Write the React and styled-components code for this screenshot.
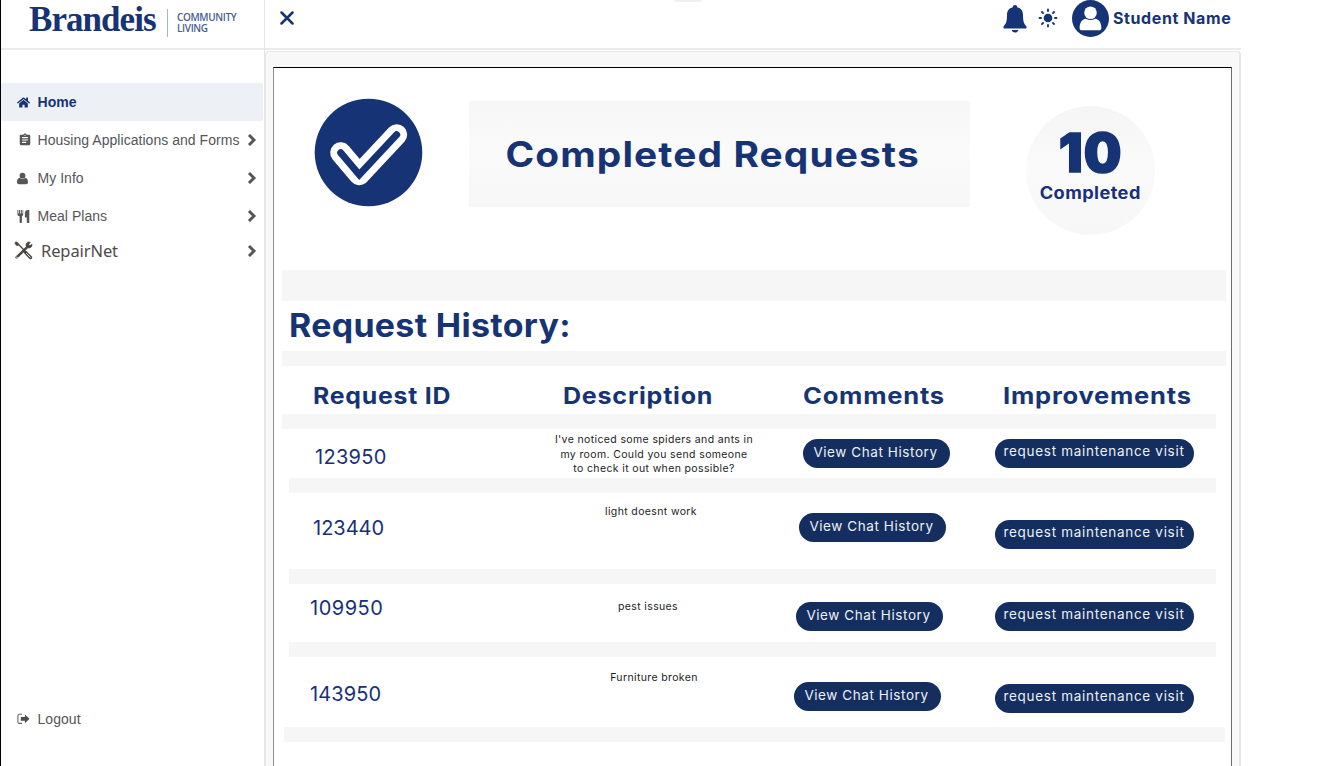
import React from "react";
import styled, { createGlobalStyle } from "styled-components";
import { FaHome } from "react-icons/fa";
import { MdAssignment } from "react-icons/md";

const NAVY = "#163475";
const INK = "#18307a";
const BAND = "#f6f6f6";

const GlobalStyle = createGlobalStyle`
  * { box-sizing: border-box; }
  body { margin: 0; background: #fff; font-family: Inter, sans-serif; overflow: hidden; }
  svg { display: block; flex: none; }
`;

const Page = styled.div`
  display: flex;
  width: 1241px;
  height: 766px;
  overflow: hidden;
`;

const Sidebar = styled.aside`
  display: flex;
  flex-direction: column;
  width: 264px;
  border-left: 1px solid #000;
  font-family: "Liberation Sans", Arial, sans-serif;
`;

const Brand = styled.div`
  display: flex;
  height: 50px;
  padding-left: 28px;
  border-bottom: 2px solid #ebebeb;
`;

const BrandName = styled.div`
  width: 138px;
  height: 40px;
  line-height: 40px;
  font-family: "Liberation Serif", serif;
  font-size: 35px;
  font-weight: 700;
  letter-spacing: -0.95px;
  color: ${NAVY};
`;

const BrandUnit = styled.div`
  height: 28px;
  margin-top: 9px;
  padding: 3px 0 0 9px;
  border-left: 1px solid #a5b3cf;
  font-family: "Open Sans", sans-serif;
  font-size: 10px;
  font-weight: 600;
  line-height: 10.5px;
  letter-spacing: -0.35px;
  color: #4a5f92;
`;

const Nav = styled.nav`
  display: flex;
  flex-direction: column;
  padding-top: 33px;
`;

const NavItem = styled.a`
  display: flex;
  align-items: center;
  width: 262px;
  height: ${(p) => (p.$large ? 31 : 38)}px;
  padding: 0 6px 0 ${(p) => (p.$large ? 13 : 16)}px;
  background: ${(p) => (p.$active ? "#edf0f4" : "transparent")};
  color: ${(p) => (p.$active ? NAVY : "#565658")};
  font-weight: ${(p) => (p.$active ? 700 : 400)};
  font-size: 14px;
  letter-spacing: 0.04px;
  white-space: nowrap;

  & > svg:last-child { margin-left: auto; }
`;

const NavIcon = styled.span`
  display: flex;
  justify-content: ${(p) => (p.$center ? "center" : "flex-start")};
  width: ${(p) => (p.$large ? 27 : 20.5)}px;
  padding-right: ${(p) => (p.$center ? 5 : 0)}px;
`;

const RepairLabel = styled.span`
  margin-top: -1px;
  font-family: "Noto Sans", sans-serif;
  font-size: 16.5px;
  letter-spacing: -0.1px;
  color: #514a4a;
`;

const Logout = styled(NavItem)`
  margin-top: auto;
  margin-bottom: 28px;
`;

const Main = styled.main`
  display: flex;
  flex-direction: column;
  width: 977px;
  border-left: 1px solid #e6e6e6;
`;

const TopBar = styled.header`
  display: flex;
  flex: none;
  align-items: flex-start;
  height: 50px;
  padding-left: 15px;
  border-bottom: 2px solid #ebebeb;
  color: ${NAVY};
`;

const CloseIcon = styled.svg`margin-top: 11px;`;

const Notch = styled.div`
  width: 28px;
  height: 2px;
  margin-left: 380px;
  border-radius: 0 0 8px 8px;
  background: #f0f0f0;
`;

const Account = styled.div`
  display: flex;
  align-items: center;
  height: 37px;
  margin: 0 9px 0 auto;
`;

const BellIcon = styled.svg`margin-right: 11px;`;
const SunIcon = styled.svg`
  margin: -2px 14px 0 0;
`;

const UserName = styled.span`
  width: 119px;
  margin: -1px 0 0 4px;
  font-size: 16px;
  font-weight: 700;
  letter-spacing: 0.6px;
  white-space: nowrap;
`;

const Panel = styled.section`
  flex: 1;
  min-height: 0;
  margin-top: 1px;
  padding: 15px 7px 0;
  border: solid #e7e7e7;
  border-width: 1px 2px 0 1px;
  border-radius: 4px 4px 0 0;
  background: #f8f8f8;
`;

const Card = styled.div`
  height: 700px;
  border: 1px solid #000;
  border-left-color: #8c8c8c;
  border-right-color: #6c6c6c;
  background: #fff;
  color: ${INK};
`;

const Hero = styled.div`
  display: flex;
  align-items: flex-start;
  height: 202px;
  padding: 30px 0 0 40px;
`;

const TitleBox = styled.div`
  display: flex;
  align-items: center;
  justify-content: center;
  width: 501px;
  height: 106px;
  margin: 3px 56px 0 46px;
  padding-right: 14px;
  background: linear-gradient(#f7f7f7, #fafafa 50%, #f7f7f7);
`;

const Title = styled.h1`
  margin: 0;
  color: ${NAVY};
  font-size: 35px;
  font-weight: 700;
  line-height: 40px;
  letter-spacing: 1px;
  white-space: nowrap;
  transform: scaleX(1.11);
`;

const Counter = styled.div`
  display: flex;
  flex-direction: column;
  align-items: center;
  width: 129px;
  height: 129px;
  margin-top: 8px;
  padding-top: 21px;
  border-radius: 50%;
  background: linear-gradient(#f5f5f5, #fafafa 45%, #f7f7f7);
  color: ${NAVY};
`;

const CountNumber = styled.strong`
  font-size: 53px;
  font-weight: 900;
  line-height: 52px;
  letter-spacing: 1px;
  -webkit-text-stroke: 1.6px ${NAVY};
`;

const CountLabel = styled.span`
  margin-top: 4px;
  font-size: 17px;
  font-weight: 700;
  line-height: 20px;
  letter-spacing: 0.4px;
  color: ${INK};
  transform: scaleX(1.07);
`;

const Band = styled.div`
  height: ${(p) => p.$height || 15}px;
  margin-left: ${(p) => p.$left}px;
  width: ${(p) => p.$width}px;
  background: ${BAND};
`;

const SectionTitle = styled.h2`
  height: 50px;
  margin: 0 0 0 15px;
  color: ${NAVY};
  font-size: 32px;
  font-weight: 700;
  line-height: 50px;
  letter-spacing: 0.3px;
  transform: scaleX(1.06);
  transform-origin: left;
`;

const Columns = styled.div`
  display: grid;
  grid-template-columns: 250px 240px 200px 1fr;
  height: 48px;
  padding: 18px 0 0 39px;
`;

const ColumnTitle = styled.h3`
  margin: 0;
  font-size: 23px;
  font-weight: 700;
  line-height: 24px;
  letter-spacing: 0.7px;
  color: ${NAVY};
  transform: scaleX(${(p) => p.$stretch});
  transform-origin: left;
`;

const Request = styled.div`
  display: grid;
  grid-template-columns: 240px 280px 200.5px 1fr;
  align-items: start;
  height: ${(p) => p.$height}px;
`;

const RequestId = styled.span`
  padding: ${(p) => p.$top}px 0 0 ${(p) => p.$left}px;
  font-size: 20px;
  line-height: 20px;
  letter-spacing: ${(p) => p.$spacing}px;
`;

const Description = styled.p`
  width: 220px;
  margin: ${(p) => p.$top}px 0 0 ${(p) => p.$left}px;
  font-size: 10.5px;
  line-height: 14.5px;
  letter-spacing: 0.37px;
  text-align: center;
  color: #1c1c1c;
`;

const Pill = styled.button`
  height: 29px;
  border: 0;
  border-radius: 15px;
  background: #142e60;
  color: #eef0f6;
  font-family: inherit;
  font-size: 13.5px;
  white-space: nowrap;
`;

const ChatButton = styled(Pill)`
  width: 147px;
  margin: ${(p) => p.$top}px 0 0 ${(p) => p.$left}px;
  padding: 0 2px 3px 0;
  letter-spacing: 0.58px;
`;

const VisitButton = styled(Pill)`
  width: 199px;
  margin-top: ${(p) => p.$top}px;
  padding: 0 0 5px;
  letter-spacing: 0.7px;
`;

const Chevron = () => (
  <svg width="10" height="12" viewBox="0 0 10 12" fill="none" stroke="#555" strokeWidth="2.9">
    <path d="M2 1l5 5-5 5" />
  </svg>
);

const Person = () => (
  <svg width="11" height="13" viewBox="0 0 11 13" fill="currentColor">
    <circle cx="5.500" cy="3.700" r="2.900" />
    <path d="M2.700 5.700c1.500 1.700 4.100 1.700 5.600 0C10.200 6 11 7.800 11 10.200c0 1.200-.8 2-1.900 2H1.900c-1.100 0-1.900-.8-1.900-2C0 7.800.8 6 2.700 5.700z" />
  </svg>
);

const Cutlery = () => (
  <svg width="13" height="13" viewBox="0 0 13 13" fill="currentColor">
    <path d="M.4 0h1v3.600h.7V0h1v3.600h.7V0h1v3.600h.7V0h.7v4.300c0 1-.7 1.700-1.300 2V12.200c0 .4-.3.7-.8.7h-.8c-.4 0-.7-.3-.7-.7V6.300C1.100 6 .4 5.300.4 4.300zM12.300 0v12.200c0 .4-.3.7-.7.7h-1.100c-.4 0-.7-.3-.7-.7V7.500H7.900V2.800C7.900 1.200 9.200 0 10.800 0z" />
  </svg>
);

const Tools = () => (
  <svg width="19" height="19" viewBox="0 0 19 19" fill="none" stroke="#4b4646">
    <path d="M2 2l2.200 1 6 6.300" strokeWidth="1.400" />
    <path d="M.8 1.800L2 .7l2.200 1.400.5 1.700-1 1-1.700-.7z" fill="#4b4646" strokeWidth=".6" />
    <path d="M11.300 11.200l5.200 5.300" strokeWidth="3.300" strokeLinecap="round" />
    <path d="M12.300 12.200l4.200 4.300" stroke="#fff" strokeWidth=".9" />
    <path d="M2.600 16.400L14.500 4.900" strokeWidth="2.500" strokeLinecap="round" />
    <path d="M16.300 1.200a3 3 0 1 0 1.700 2.200l-2.200 1.200-1.200-1.300z" fill="#4b4646" strokeWidth=".7" />
    <path d="M2.800 16.200h.1" stroke="#fff" strokeWidth="1.200" strokeLinecap="round" />
  </svg>
);

const LogoutIcon = () => (
  <svg width="13" height="12" viewBox="0 0 13 12">
    <path d="M5 1.200H2.400A1.500 1.500 0 0 0 .9 2.700v6.200a1.500 1.500 0 0 0 1.500 1.500H5" fill="none" stroke="#6a6a6a" strokeWidth="1.100" />
    <path d="M12.500 5.800L7.900 1.400V4H3.800v3.700h4.100v2.600z" fill="#4d4d4d" />
  </svg>
);

const CheckBadge = () => (
  <svg width="109" height="109" viewBox="0 0 109 109" fill="none">
    <circle cx="54.500" cy="54.500" r="53.800" fill={NAVY} />
    <path d="M26.700 54.700l18.600 22 37.400-40" stroke="#fff" strokeWidth="21" strokeLinecap="round" strokeLinejoin="round" />
    <path d="M26.700 54.700l18.600 22 37.400-40" stroke={NAVY} strokeWidth="7" strokeLinecap="round" />
  </svg>
);

const SUN_RAYS = [0, 45, 90, 135, 180, 225, 270, 315];

const NAV = [
  { label: "Home", icon: <FaHome size={13} />, active: true },
  { label: "Housing Applications and Forms", icon: <MdAssignment size={14} />, center: true },
  { label: "My Info", icon: <Person /> },
  { label: "Meal Plans", icon: <Cutlery /> },
];

const REQUESTS = [
  { id: "123950", height: 49, idPos: [18, 41], spacing: 0.3, text: ["I've noticed some spiders and ants in", "my room. Could you send someone", "to check it out when possible?"], textPos: [4, 30], chat: [10, 9], visit: 10, end: [15, 927] },
  { id: "123440", height: 76, idPos: [25, 39], spacing: 0, text: ["light doesnt work"], textPos: [12, 27], chat: [20, 5], visit: 27, end: [15, 927] },
  { id: "109950", height: 58, idPos: [14, 36], spacing: 0.5, text: ["pest issues"], textPos: [16, 24], chat: [18, 2], visit: 18, end: [15, 927] },
  { id: "143950", height: 70, idPos: [27, 36], spacing: 0.1, text: ["Furniture broken"], textPos: [14, 30], chat: [25, 0], visit: 27, end: [10, 941] },
];

export default function App() {
  return (
    <Page>
      <GlobalStyle />
      <Sidebar>
        <Brand>
          <BrandName>Brandeis</BrandName>
          <BrandUnit>COMMUNITY<br />LIVING</BrandUnit>
        </Brand>
        <Nav>
          {NAV.map((n) => (
            <NavItem key={n.label} $active={n.active}>
              <NavIcon $center={n.center}>{n.icon}</NavIcon>
              <span>{n.label}</span>
              {!n.active && <Chevron />}
            </NavItem>
          ))}
          <NavItem $large>
            <NavIcon $large><Tools /></NavIcon>
            <RepairLabel>RepairNet</RepairLabel>
            <Chevron />
          </NavItem>
        </Nav>
        <Logout>
          <NavIcon><LogoutIcon /></NavIcon>
          <span>Logout</span>
        </Logout>
      </Sidebar>
      <Main>
        <TopBar>
          <CloseIcon width="14" height="14" viewBox="0 0 14 14" fill="none" stroke="currentColor" strokeWidth="2.500" strokeLinecap="round">
            <path d="M1.500 1.500l11 11M12.500 1.500l-11 11" />
          </CloseIcon>
          <Notch />
          <Account>
            <BellIcon width="24" height="28" viewBox="0 0 24 28" fill="currentColor">
              <path d="M12 0c1.300 0 2.200.9 2.200 2.200 3.900 1 5.800 3.900 5.800 7.500 0 5.900.7 8.700 3.100 11.300.9 1 .6 2.600-.8 2.600H1.700C.3 23.600 0 22 .9 21 3.300 18.400 4 15.600 4 9.700c0-3.600 1.900-6.500 5.800-7.500C9.800.9 10.700 0 12 0zM8.600 25h6.800c-.4 1.500-1.800 2.500-3.400 2.500S9 26.500 8.600 25z" />
            </BellIcon>
            <SunIcon width="20" height="20" viewBox="-10 -10 20 20">
              <circle r="4.300" fill="currentColor" />
              {SUN_RAYS.map((a) => (
                <path key={a} d="M0-7V-8.500" transform={`rotate(${a})`} stroke="currentColor" strokeWidth="1.900" strokeLinecap="round" />
              ))}
            </SunIcon>
            <svg width="37" height="37" viewBox="0 0 37 37">
              <circle cx="18.500" cy="18.500" r="18.500" fill="currentColor" />
              <circle cx="18.500" cy="12.800" r="6.300" fill="#fff" />
              <path d="M7.600 28c0-5.300 2.300-8.800 6.200-9.300 3 1.800 6.400 1.800 9.400 0 3.900.5 6.200 4 6.200 9.300 0 1.500-.9 2.300-2.300 2.300H9.900c-1.400 0-2.300-.8-2.300-2.300z" fill="#fff" />
            </svg>
            <UserName>Student Name</UserName>
          </Account>
        </TopBar>
        <Panel>
          <Card>
            <Hero>
              <CheckBadge />
              <TitleBox>
                <Title>Completed Requests</Title>
              </TitleBox>
              <Counter>
                <CountNumber>10</CountNumber>
                <CountLabel>Completed</CountLabel>
              </Counter>
            </Hero>
            <Band $left={8} $width={944} $height={31} />
            <SectionTitle>Request History:</SectionTitle>
            <Band $left={8} $width={944} />
            <Columns>
              <ColumnTitle $stretch={1.08}>Request ID</ColumnTitle>
              <ColumnTitle $stretch={1.09}>Description</ColumnTitle>
              <ColumnTitle $stretch={1.11}>Comments</ColumnTitle>
              <ColumnTitle $stretch={1.11}>Improvements</ColumnTitle>
            </Columns>
            <Band $left={8} $width={934} />
            {REQUESTS.map((r) => (
              <React.Fragment key={r.id}>
                <Request $height={r.height}>
                  <RequestId $top={r.idPos[0]} $left={r.idPos[1]} $spacing={r.spacing}>{r.id}</RequestId>
                  <Description $top={r.textPos[0]} $left={r.textPos[1]}>
                    {r.text.map((line, i) => (
                      <React.Fragment key={line}>{i > 0 && <br />}{line}</React.Fragment>
                    ))}
                  </Description>
                  <ChatButton $top={r.chat[0]} $left={r.chat[1]}>View Chat History</ChatButton>
                  <VisitButton $top={r.visit}>request maintenance visit</VisitButton>
                </Request>
                <Band $left={r.end[0]} $width={r.end[1]} />
              </React.Fragment>
            ))}
          </Card>
        </Panel>
      </Main>
    </Page>
  );
}
